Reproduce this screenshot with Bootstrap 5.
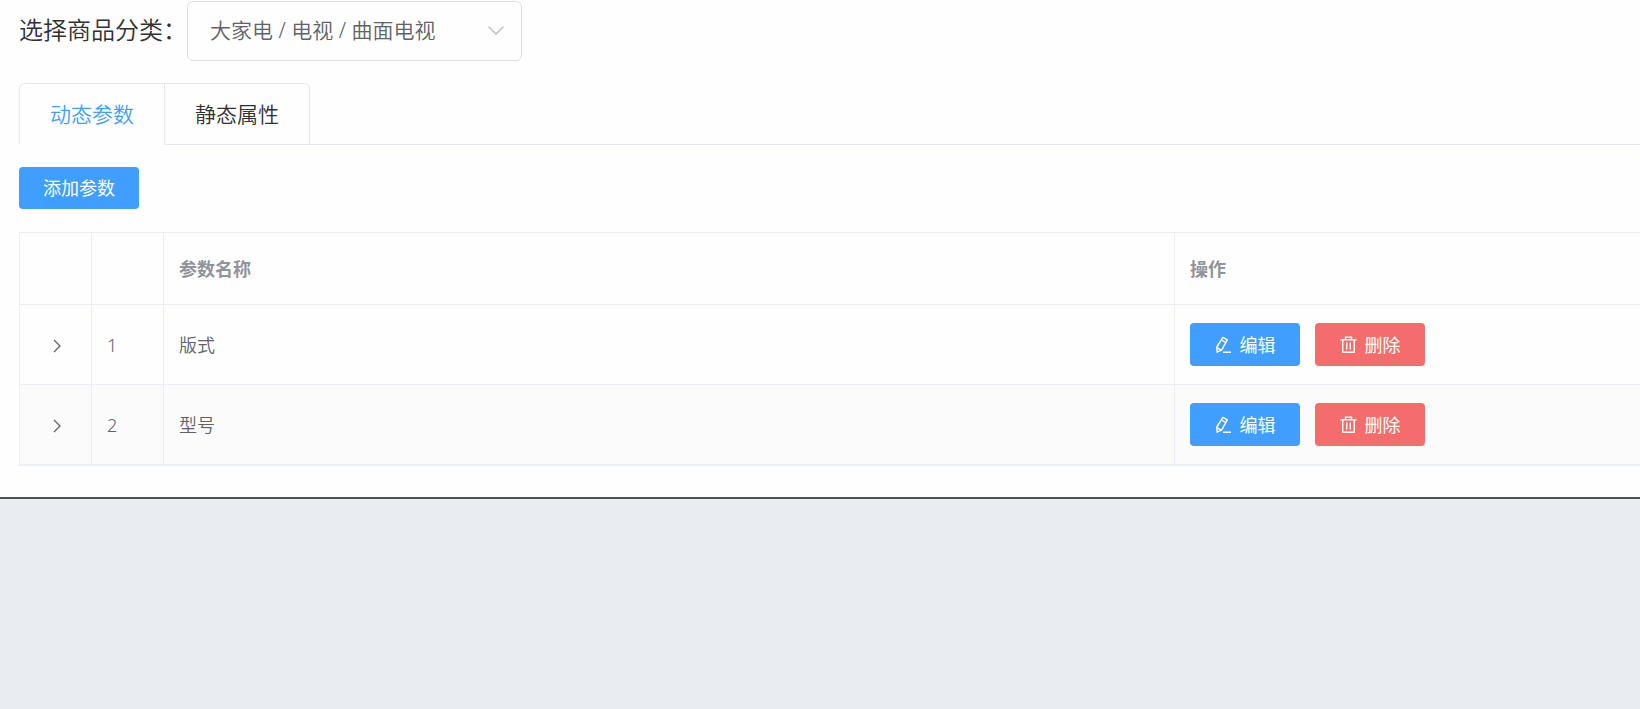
<!DOCTYPE html>
<html lang="zh-CN">
<head>
<meta charset="utf-8">
<meta name="viewport" content="width=device-width, initial-scale=1">
<title>分类参数</title>
<link href="https://cdn.jsdelivr.net/npm/bootstrap@5.3.0/dist/css/bootstrap.min.css" rel="stylesheet">
<style>
  :root { --line: #e4e7ed; --cell-line: #ebeef5; --blue: #409eff; --red: #f56c6c; --text-weight: 350; }
  body { background: #e9edf2; color: #303133; font-family: "Noto Sans", "Noto Sans CJK SC", sans-serif; font-size: 18px; font-weight: var(--text-weight); line-height: 24px; }
  .panel { background: #fefefe; border-bottom: 2px solid #4d5055; padding: 1px 0 31px 19px; }
  .picker-label { font-size: 24px; padding-bottom: 3px; }
  .picker { width: 335px; height: 60px; padding: 0 52px 3px 22px; border: 1px solid #dcdfe6; border-radius: 6px; color: #606266; font-size: 21px; font-weight: var(--text-weight); line-height: 30px; background-color: #fefefe;
    background-image: url("data:image/svg+xml,%3Csvg xmlns='http://www.w3.org/2000/svg' viewBox='0 0 18 12'%3E%3Cpath d='M2 2l7 7 7-7' fill='none' stroke='%23c0c4cc' stroke-width='1.6' stroke-linecap='round'/%3E%3C/svg%3E");
    background-size: 18px 12px; background-position: right 16px center; }
  .param-tabs { --bs-nav-tabs-border-color: var(--line); margin-top: 22px; }
  .param-tabs .nav-link { height: 62px; padding: 0 30px; font-size: 21px; font-weight: var(--text-weight); border: 1px solid var(--line); border-radius: 0; color: #303133; }
  .param-tabs .nav-link.active { color: var(--blue); background: #fefefe; border-color: var(--line) var(--line) #fefefe; border-top-left-radius: 6px; }
  .param-tabs .nav-item:last-child .nav-link { border-left: 0; border-top-right-radius: 6px; }
  .act { height: 43px; padding: 0 22px; border: 0; border-radius: 4px; color: #fff; font-size: 18px; font-weight: 400; line-height: 24px; }
  .act:hover { color: #fff; }
  .act-blue, .act-blue:hover { background: var(--blue); }
  .act-red, .act-red:hover { background: var(--red); }
  .act-add { height: 42px; margin: 22px 0 23px; width: 120px; }
  .row-act { width: 110px; gap: 8px; }
  .row-acts { gap: 15px; }
  .params { --bs-table-bg: transparent; table-layout: fixed; border-left: 1px solid var(--cell-line); border-top: 1px solid var(--cell-line); border-bottom: 1px solid var(--cell-line); border-collapse: separate; border-spacing: 0; color: #606266; }
  .params th, .params td { padding: 0 15px; vertical-align: middle; border: 0 solid var(--cell-line); border-width: 0 1px 1px 0; }
  .params th:last-child, .params td:last-child { border-right: 0; }
  .params th { height: 72px; color: #909399; font-weight: 700; }
  .params td { height: 80px; }
  .params tbody tr:last-child td { background: #fcfbfc; }
  .col-small { width: 72px; }
  .col-actions { width: 465px; }
  .expander { width: 44px; height: 40px; padding: 2px 0 0; border: 0; background: none; color: #606266; }
</style>
</head>
<body>
<main class="panel overflow-hidden">
  <div class="d-flex align-items-center">
    <label class="picker-label text-nowrap" for="category">选择商品分类：</label>
    <select class="form-select picker" id="category"><option>大家电 / 电视 / 曲面电视</option></select>
  </div>
  <ul class="nav nav-tabs param-tabs" role="tablist">
    <li class="nav-item" role="presentation"><button class="nav-link active" type="button" role="tab" aria-selected="true">动态参数</button></li>
    <li class="nav-item" role="presentation"><button class="nav-link" type="button" role="tab" aria-selected="false">静态属性</button></li>
  </ul>
  <button class="btn act act-blue act-add d-block" type="button">添加参数</button>
  <table class="table params mb-0">
    <colgroup><col class="col-small"><col class="col-small"><col><col class="col-actions"></colgroup>
    <thead><tr><th></th><th></th><th>参数名称</th><th>操作</th></tr></thead>
    <tbody>
      <tr>
        <td><button class="expander d-flex align-items-center justify-content-center" type="button" aria-label="展开"><svg width="10" height="14" viewBox="0 0 10 14" fill="none" stroke="currentColor" stroke-width="1.3"><path d="M2 1l6 6-6 6"/></svg></button></td>
        <td>1</td><td>版式</td>
        <td><div class="d-flex row-acts">
          <button class="btn act act-blue row-act d-flex align-items-center justify-content-center" type="button"><svg width="17" height="18" viewBox="0 0 17 18" fill="none" stroke="currentColor" stroke-width="1.4" stroke-linejoin="round"><path d="M8 1.3l4.3 2.5-5.6 10-4.6 2.4-.3-5.2zM6.4 4l4.3 2.5M2 11.5l4 2.6M8 16.3h8"/></svg>编辑</button>
          <button class="btn act act-red row-act d-flex align-items-center justify-content-center" type="button"><svg width="17" height="18" viewBox="0 0 17 18" fill="none" stroke="currentColor" stroke-width="1.4"><path d="M.5 3.7h16M5.5 3.5V1.3h6v2.2M2.7 3.7v12.6h11.6V3.7M6.7 6.5v7M10.3 6.5v7"/></svg>删除</button>
        </div></td>
      </tr>
      <tr>
        <td><button class="expander d-flex align-items-center justify-content-center" type="button" aria-label="展开"><svg width="10" height="14" viewBox="0 0 10 14" fill="none" stroke="currentColor" stroke-width="1.3"><path d="M2 1l6 6-6 6"/></svg></button></td>
        <td>2</td><td>型号</td>
        <td><div class="d-flex row-acts">
          <button class="btn act act-blue row-act d-flex align-items-center justify-content-center" type="button"><svg width="17" height="18" viewBox="0 0 17 18" fill="none" stroke="currentColor" stroke-width="1.4" stroke-linejoin="round"><path d="M8 1.3l4.3 2.5-5.6 10-4.6 2.4-.3-5.2zM6.4 4l4.3 2.5M2 11.5l4 2.6M8 16.3h8"/></svg>编辑</button>
          <button class="btn act act-red row-act d-flex align-items-center justify-content-center" type="button"><svg width="17" height="18" viewBox="0 0 17 18" fill="none" stroke="currentColor" stroke-width="1.4"><path d="M.5 3.7h16M5.5 3.5V1.3h6v2.2M2.7 3.7v12.6h11.6V3.7M6.7 6.5v7M10.3 6.5v7"/></svg>删除</button>
        </div></td>
      </tr>
    </tbody>
  </table>
</main>
<script src="https://cdn.jsdelivr.net/npm/bootstrap@5.3.0/dist/js/bootstrap.bundle.min.js"></script>
</body>
</html>
